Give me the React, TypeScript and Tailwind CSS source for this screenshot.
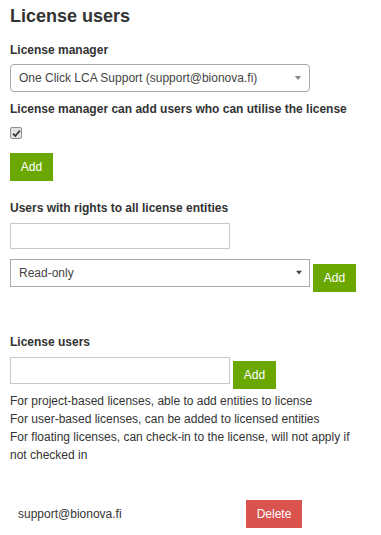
import { useState } from "react";

const FONT = "font-['Liberation_Sans',Arial,sans-serif]";

function AddButton({ className = "" }: { className?: string }) {
  return (
    <button
      type="button"
      className={`h-[28px] w-[43px] shrink-0 bg-[#6aa800] text-[12px] text-white ${className}`}
    >
      Add
    </button>
  );
}

function Caret({ className = "" }: { className?: string }) {
  return (
    <svg
      viewBox="0 0 8 5"
      className={`pointer-events-none absolute ${className}`}
      aria-hidden="true"
    >
      <path d="M0 0h8L4 5z" fill="currentColor" />
    </svg>
  );
}

export default function App() {
  const [canAdd, setCanAdd] = useState(true);

  return (
    <div className={`min-h-[535px] w-[381px] bg-white px-[10px] text-[#333] ${FONT}`}>
      <h2 className="pt-[6px] text-[18px] leading-[20px] font-bold">License users</h2>

      {/* License manager */}
      <label className="mt-[16px] block text-[12px] leading-[16px] font-bold">
        License manager
      </label>
      <div className="relative mt-[6px] w-[300px]">
        <select className="h-[28px] w-full appearance-none rounded-[4px] border border-[#aaa] bg-white pl-[8px] text-[12px] text-[#444] outline-none">
          <option>One Click LCA Support (support@bionova.fi)</option>
        </select>
        <Caret className="top-[12px] right-[8px] h-[4px] w-[8px] text-[#888]" />
      </div>

      <label className="mt-[9px] block text-[12px] leading-[16px] font-bold">
        License manager can add users who can utilise the license
      </label>
      <button
        type="button"
        onClick={() => setCanAdd(!canAdd)}
        className="mt-[10px] flex h-[12px] w-[12px] items-center justify-center rounded-[2px] border border-[#8f8f8f] bg-[#e2e2e2]"
        aria-pressed={canAdd}
      >
        {canAdd && (
          <svg viewBox="0 0 10 10" className="h-[9px] w-[9px]" aria-hidden="true">
            <path d="M1.2 5.2l2.4 2.5L8.8 1.8" fill="none" stroke="#333" strokeWidth="1.8" />
          </svg>
        )}
      </button>
      <AddButton className="mt-[14px] block" />

      {/* Users with rights to all entities */}
      <label className="mt-[19px] block text-[12px] leading-[16px] font-bold">
        Users with rights to all license entities
      </label>
      <input
        type="text"
        className="mt-[7px] block h-[26px] w-[220px] border border-[#c8c8c8] px-[6px] text-[12px] outline-none"
      />
      <div className="mt-[10px] flex items-start gap-[3px]">
        <div className="relative w-[300px]">
          <select className="h-[28px] w-full appearance-none border border-[#aaa] bg-white pl-[8px] text-[12px] text-[#444] outline-none">
            <option>Read-only</option>
          </select>
          <Caret className="top-[11px] right-[8px] h-[5px] w-[6px] text-[#444]" />
        </div>
        <AddButton className="mt-[5px]" />
      </div>

      {/* License users */}
      <label className="mt-[42px] block text-[12px] leading-[16px] font-bold">
        License users
      </label>
      <div className="mt-[7px] flex items-start gap-[3px]">
        <input
          type="text"
          className="h-[27px] w-[220px] border border-[#c8c8c8] px-[6px] text-[12px] outline-none"
        />
        <AddButton className="mt-[4px]" />
      </div>
      <div className="mt-[3px] max-w-[355px] text-[12px] leading-[18px] text-[#333]">
        <p>For project-based licenses, able to add entities to license</p>
        <p>For user-based licenses, can be added to licensed entities</p>
        <p>For floating licenses, can check-in to the license, will not apply if not checked in</p>
      </div>

      <div className="mt-[36px] flex items-center pl-[8px]">
        <span className="w-[228px] text-[12px]">support@bionova.fi</span>
        <button type="button" className="h-[28px] w-[56px] bg-[#d9534f] text-[12px] text-white">
          Delete
        </button>
      </div>
    </div>
  );
}
